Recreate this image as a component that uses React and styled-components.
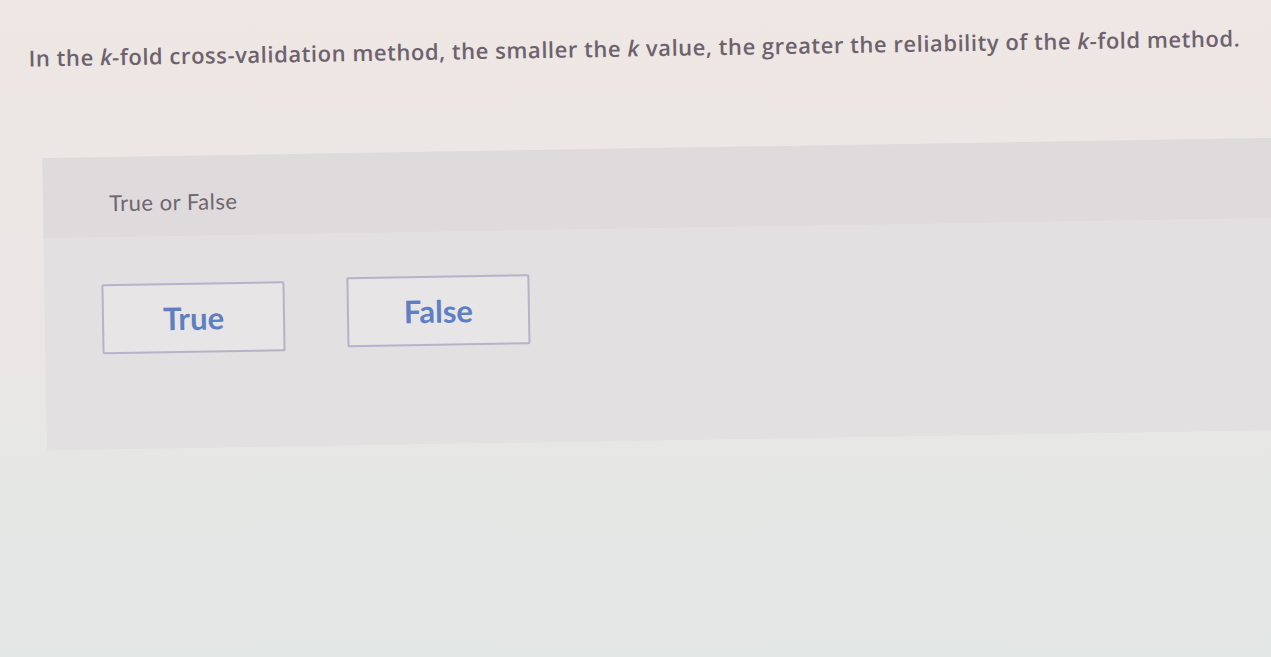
import React from 'react';
import styled, { createGlobalStyle } from 'styled-components';

const GlobalStyle = createGlobalStyle`
  html, body {
    margin: 0;
    padding: 0;
    height: 100%;
  }
  body {
    background: linear-gradient(180deg, #eee7e4 0%, #ebe6e5 45%, #e5e7e5 75%, #e3e7e6 100%);
    font-family: Lato, "Open Sans", "Liberation Sans", sans-serif;
    overflow: hidden;
  }
`;

const Page = styled.div`
  width: 1271px;
  height: 657px;
  padding-top: 25px;
  box-sizing: border-box;
  transform: rotate(-0.95deg);
  transform-origin: 0 0;
  margin-top: 18px;
`;

const Question = styled.p`
  margin: 0 0 0 28px;
  font-family: "Open Sans", Lato, "Liberation Sans", sans-serif;
  font-size: 22px;
  font-weight: 600;
  color: #6d626d;
  letter-spacing: 0.55px;
  white-space: nowrap;

  i {
    font-style: italic;
  }
`;

const Panel = styled.section`
  margin: 86px 0 0 40px;
  width: 1260px;
  background: #e2dedf;
`;

const PanelHead = styled.div`
  height: 80px;
  display: flex;
  align-items: center;
  padding: 10px 0 0 66px;
  box-sizing: border-box;
  background: #dfdadc;
`;

const Label = styled.span`
  font-size: 22px;
  color: #6f6670;
  letter-spacing: 0.5px;
`;

const Choices = styled.div`
  display: flex;
  gap: 62px;
  padding: 47px 0 95px 57px;
  background: #e3e0e2;
`;

const Choice = styled.button`
  width: 183px;
  height: 70px;
  display: flex;
  align-items: center;
  justify-content: center;
  background: #e8e5e7;
  border: 2px solid #b4b3c9;
  border-radius: 2px;
  font-family: Lato, "Open Sans", "Liberation Sans", sans-serif;
  font-size: 31px;
  font-weight: 700;
  color: #5e7fc2;
  transform: translateY(${p => p.$lift}px);
  cursor: pointer;
`;

export default function App() {
  return (
    <>
      <GlobalStyle />
      <Page>
        <Question>
          In the <i>k</i>-fold cross-validation method, the smaller the <i>k</i> value, the greater the reliability of the <i>k</i>-fold method.
        </Question>
        <Panel>
          <PanelHead>
            <Label>True or False</Label>
          </PanelHead>
          <Choices>
            <Choice $lift={0}>True</Choice>
            <Choice $lift={-3}>False</Choice>
          </Choices>
        </Panel>
      </Page>
    </>
  );
}
